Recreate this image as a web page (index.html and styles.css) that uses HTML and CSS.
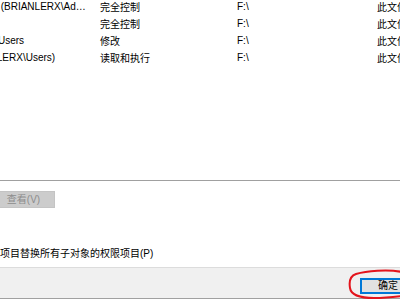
FILE: index.html
```html
<!DOCTYPE html>
<html lang="zh-CN">
<head>
    <meta charset="UTF-8">
    <title>高级安全设置</title>
    <link rel="stylesheet" href="styles.css">
</head>
<body>
    <div class="dialog">
        <div class="acl-list">
            <div class="acl-row">
                <span class="col-principal">Administrators (BRIANLERX\Administrators)</span>
                <span class="col-access">完全控制</span>
                <span class="col-from">F:\</span>
                <span class="col-apply">此文件夹、子文件夹和文件</span>
            </div>
            <div class="acl-row">
                <span class="col-principal">SYSTEM</span>
                <span class="col-access">完全控制</span>
                <span class="col-from">F:\</span>
                <span class="col-apply">此文件夹、子文件夹和文件</span>
            </div>
            <div class="acl-row">
                <span class="col-principal">Authenticated Users</span>
                <span class="col-access">修改</span>
                <span class="col-from">F:\</span>
                <span class="col-apply">此文件夹、子文件夹和文件</span>
            </div>
            <div class="acl-row">
                <span class="col-principal">Users (BRIANLERX\Users)</span>
                <span class="col-access">读取和执行</span>
                <span class="col-from">F:\</span>
                <span class="col-apply">此文件夹、子文件夹和文件</span>
            </div>
        </div>

        <div class="actions">
            <button class="btn" disabled>查看(V)</button>
        </div>

        <label class="replace-option">
            <input type="checkbox">
            <span>使用可从此对象继承的权限项目替换所有子对象的权限项目(P)</span>
        </label>

        <div class="footer">
            <button class="btn btn-default">确定</button>
        </div>
    </div>

    <!-- red hand-drawn circle around the OK button -->
    <svg class="annotation" width="60" height="35" viewBox="0 0 60 35">
        <path d="M62 7 C48 4, 26 6, 16 9 C10 11, 9 17, 10 23 C11 30, 20 33, 34 33 C44 33, 54 32, 62 31"
              fill="none" stroke="#e3141c" stroke-width="2" stroke-linecap="round"/>
    </svg>
</body>
</html>
```

FILE: styles.css
```css
body {
    margin: 0;
    width: 400px;
    height: 300px;
    overflow: hidden;
    position: relative;
    background: #ffffff;
    font-family: 'Liberation Sans', 'Noto Sans CJK SC', sans-serif;
    font-size: 10px;
    color: #000;
}

.dialog {
    width: 400px;
}

.acl-list {
    margin-top: -2px;
    height: 183px;
    box-sizing: border-box;
    border-bottom: 1px solid #a0a0a0;
}

.acl-row {
    display: grid;
    grid-template-columns: 166px 137px 140px 1fr;
    height: 17px;
    align-items: center;
    margin-left: -66px;
    white-space: nowrap;
}

.col-principal {
    overflow: hidden;
    text-overflow: ellipsis;
    padding-right: 14px;
}

.col-apply {
    overflow: hidden;
}

.actions {
    padding-top: 10px;
    display: flex;
}

.btn {
    font-family: inherit;
    font-size: 10px;
    height: 17px;
    padding: 0;
    box-sizing: border-box;
    line-height: 1;
}

.actions .btn {
    margin-left: -8px;
    width: 63px;
    background: #cccccc;
    border: 1px solid #c4c4c4;
    color: #8c8c8c;
}

.replace-option {
    display: flex;
    align-items: center;
    gap: 5px;
    margin-top: 36px;
    margin-left: -138px;
    height: 16px;
    white-space: nowrap;
}

.replace-option input {
    margin: 0;
    width: 13px;
    height: 13px;
}

.footer {
    margin-top: 7px;
    height: 32px;
    box-sizing: border-box;
    padding-top: 10px;
    background: #f0f0f0;
    border-top: 1px solid #dcdcdc;
    border-bottom: 1px solid #a0a0a0;
    display: flex;
    justify-content: flex-end;
}

.btn-default {
    width: 56px;
    height: 16px;
    margin-right: -16px;
    background: #e1e1e1;
    border: 2px solid #0078d7;
    color: #000;
}

.annotation {
    position: absolute;
    left: 340px;
    top: 265px;
}
```
